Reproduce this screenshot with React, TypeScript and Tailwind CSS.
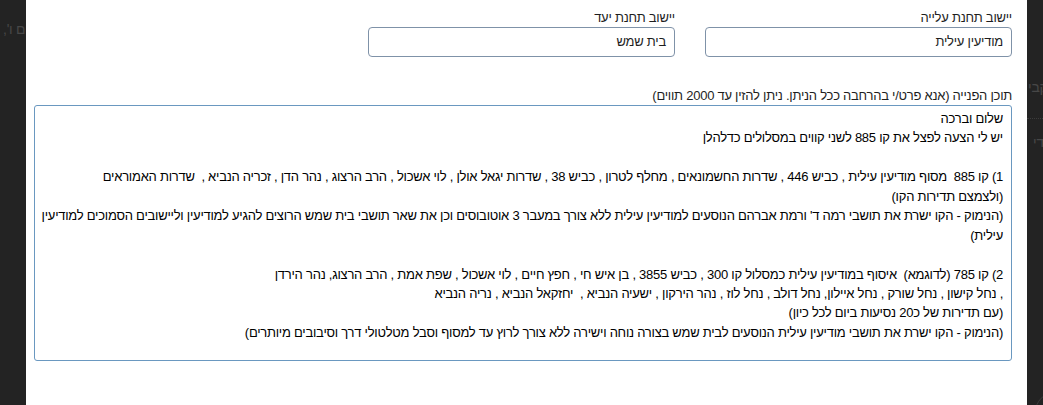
const lines = [
  "שלום וברכה",
  "יש לי הצעה לפצל את קו 885 לשני קווים במסלולים כדלהלן",
  "",
  "1) קו 885  מסוף מודיעין עילית , כביש 446 , שדרות החשמונאים , מחלף לטרון , כביש 38 , שדרות יגאל אולן , לוי אשכול , הרב הרצוג , נהר הדן , זכריה הנביא ,  שדרות האמוראים",
  "(ולצמצם תדירות הקו)",
  "(הנימוק - הקו ישרת את תושבי רמה ד' ורמת אברהם הנוסעים למודיעין עילית ללא צורך במעבר 3 אוטובוסים וכן את שאר תושבי בית שמש הרוצים להגיע למודיעין וליישובים הסמוכים למודיעין",
  "עילית)",
  "",
  "2) קו 785 (לדוגמא)  איסוף במודיעין עילית כמסלול קו 300 , כביש 3855 , בן איש חי , חפץ חיים , לוי אשכול , שפת אמת , הרב הרצוג, נהר הירדן",
  ", נחל קישון , נחל שורק , נחל איילון, נחל דולב , נחל לוז , נהר הירקון , ישעיה הנביא ,  יחזקאל הנביא , נריה הנביא",
  "(עם תדירות של כ20 נסיעות ביום לכל כיון)",
  "(הנימוק - הקו ישרת את תושבי מודיעין עילית הנוסעים לבית שמש בצורה נוחה וישירה ללא צורך לרוץ עד למסוף וסבל מטלטולי דרך וסיבובים מיותרים)",
]

function Field({ label, value }: { label: string; value: string }) {
  return (
    <div className="w-[307px] shrink-0">
      <label className="block leading-[18px]">{label}</label>
      <div className="h-[30px] rounded-[4px] border border-[#7f92a8] px-[8px] leading-[28px]">
        {value}
      </div>
    </div>
  )
}

export default function App() {
  return (
    <div className="flex h-[405px] w-full overflow-hidden bg-[#232323] font-['Liberation_Sans',Arial,sans-serif] text-[13px] tracking-[-0.25px]">
      {/* overlay strip, left */}
      <div className="w-[26px] shrink-0 overflow-hidden pl-[3px] pt-[19px]">
        <span dir="rtl" className="whitespace-nowrap text-[14px] text-[#474747]">
          יום ו',
        </span>
      </div>

      <div dir="rtl" className="min-w-0 flex-1 overflow-hidden bg-white pl-[8px] pr-[15px] pt-[9px] text-[#1e1e1e]">
        <div className="flex gap-[30px]">
          <Field label="יישוב תחנת עלייה" value="מודיעין עילית" />
          <Field label="יישוב תחנת יעד" value="בית שמש" />
        </div>

        <label className="mt-[30px] block leading-[18px]">
          תוכן הפנייה (אנא פרט/י בהרחבה ככל הניתן. ניתן להזין עד 2000 תווים)
        </label>
        <div className="h-[256px] overflow-hidden rounded-[3px] border border-[#6a98c0] px-[8px] pt-[3px] leading-[19.45px] text-black">
          {lines.map((line, i) => (
            <div key={i} className="h-[19.45px] whitespace-pre">
              {line || "\u00a0"}
            </div>
          ))}
        </div>
      </div>

      {/* overlay strip, right */}
      <div className="relative w-[16px] shrink-0 overflow-hidden text-[14px] text-[#474747]">
        <div dir="rtl" className="absolute left-[1px] top-[77px] whitespace-nowrap">
          קבי
        </div>
        <div className="absolute left-0 top-[118px] w-full border-t border-dotted border-[#3c3c3c]" />
        <div dir="rtl" className="absolute left-[6px] top-[132px] whitespace-nowrap">
          די
        </div>
        <div className="absolute left-[8px] top-[392px] h-[40px] w-[40px] rounded-full border border-[#3c3c3c]" />
      </div>
    </div>
  )
}
